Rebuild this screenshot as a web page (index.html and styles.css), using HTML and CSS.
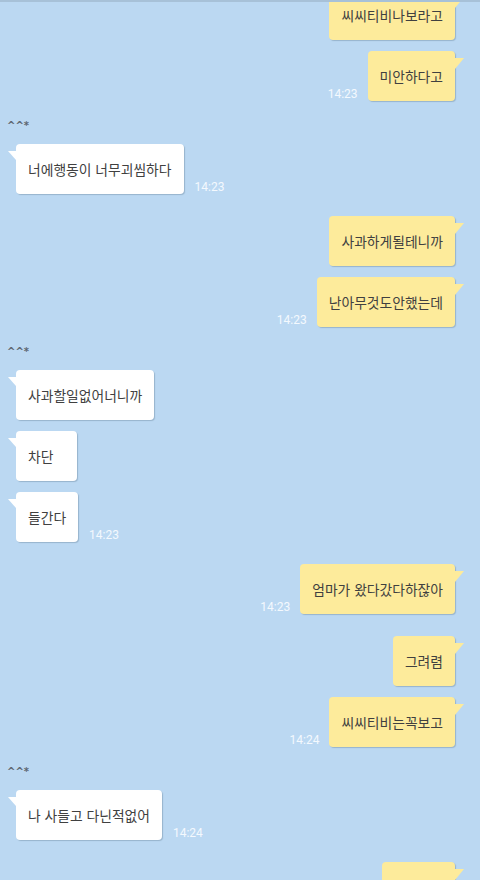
FILE: index.html
```html
<!DOCTYPE html>
<html lang="ko">
<head>
    <meta charset="UTF-8">
    <meta name="viewport" content="width=device-width, initial-scale=1.0">
    <title>채팅</title>
    <link rel="stylesheet" href="styles.css">
</head>
<body>
    <div class="screen">
        <div class="chat">

            <div class="group me">
                <div class="row"><div class="bubble">씨씨티비나보라고</div></div>
                <div class="row"><span class="time">14:23</span><div class="bubble">미안하다고</div></div>
            </div>

            <div class="group you">
                <div class="name">^^*</div>
                <div class="row"><div class="bubble">너에행동이 너무괴씸하다</div><span class="time">14:23</span></div>
            </div>

            <div class="group me">
                <div class="row"><div class="bubble">사과하게될테니까</div></div>
                <div class="row"><span class="time">14:23</span><div class="bubble">난아무것도안했는데</div></div>
            </div>

            <div class="group you">
                <div class="name">^^*</div>
                <div class="row"><div class="bubble">사과할일없어너니까</div></div>
                <div class="row"><div class="bubble">차단</div></div>
                <div class="row"><div class="bubble">들간다</div><span class="time">14:23</span></div>
            </div>

            <div class="group me">
                <div class="row"><span class="time">14:23</span><div class="bubble">엄마가 왔다갔다하잖아</div></div>
            </div>

            <div class="group me">
                <div class="row"><div class="bubble">그려렴</div></div>
                <div class="row"><span class="time">14:24</span><div class="bubble">씨씨티비는꼭보고</div></div>
            </div>

            <div class="group you">
                <div class="name">^^*</div>
                <div class="row"><div class="bubble">나 사들고 다닌적없어</div><span class="time">14:24</span></div>
            </div>

            <!-- next message, only its top edge is on screen -->
            <div class="group me">
                <div class="row"><div class="bubble partial"></div></div>
            </div>

        </div>
    </div>
</body>
</html>
```

FILE: styles.css
```css
body {
    margin: 0;
    padding: 0;
    background-color: #bbd8f2;
    font-family: "Noto Sans CJK KR", "Noto Sans", sans-serif;
}
.screen {
    height: 878px;
    border-top: 2px solid #a7c1d8;
    overflow: hidden;
}
.chat {
    display: flex;
    flex-direction: column;
    gap: 22px;
    margin-top: -12px;
}
.group {
    display: flex;
    flex-direction: column;
    gap: 11px;
}
.group.me {
    padding-right: 25px;
}
.group.you {
    padding-left: 16px;
}
.row {
    display: flex;
    align-items: flex-end;
    gap: 10px;
}
.me .row {
    justify-content: flex-end;
}
.you .row {
    gap: 11px;
}
.name {
    margin: -3px 0 1px -9px;
    font-family: "DejaVu Sans", sans-serif;
    font-size: 10px;
    line-height: 12px;
    font-weight: bold;
    color: #5d6670;
}
.bubble {
    position: relative;
    height: 50px;
    min-width: 61px;
    display: flex;
    align-items: center;
    padding: 0 12px;
    box-sizing: border-box;
    border-radius: 4px;
    font-size: 13.8px;
    color: #404040;
    background-color: #fff;
    box-shadow: 1px 1px 1px rgba(70, 95, 120, 0.3);
    white-space: nowrap;
}
.me .bubble {
    background-color: #fdeb9b;
}
.bubble.partial {
    width: 73px;
}
.bubble::after {
    content: "";
    position: absolute;
    top: 7px;
    width: 9px;
    height: 11px;
    background-color: inherit;
}
.me .bubble::after {
    right: -9px;
    clip-path: polygon(0 0, 100% 0, 0 100%);
}
.you .bubble::after {
    left: -8px;
    width: 8px;
    height: 9px;
    clip-path: polygon(0 0, 100% 0, 100% 100%);
}
.time {
    font-family: Roboto, sans-serif;
    font-size: 12px;
    line-height: 12px;
    margin-bottom: 1px;
    color: #f4f9fe;
}
```
